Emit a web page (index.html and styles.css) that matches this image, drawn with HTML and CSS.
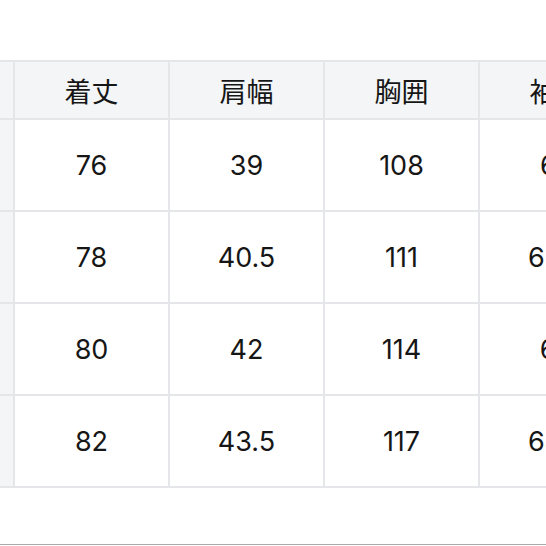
FILE: index.html
```html
<!DOCTYPE html>
<html lang="ja">
<head>
<meta charset="utf-8">
<title>サイズ表</title>
<link rel="stylesheet" href="styles.css">
</head>
<body>
<div class="frame">
  <div class="size-grid">
    <div class="cell head"></div>
    <div class="cell head">着丈</div>
    <div class="cell head">肩幅</div>
    <div class="cell head">胸囲</div>
    <div class="cell head">袖丈</div>

    <div class="cell label"></div>
    <div class="cell">76</div>
    <div class="cell">39</div>
    <div class="cell">108</div>
    <div class="cell">62</div>

    <div class="cell label"></div>
    <div class="cell">78</div>
    <div class="cell">40.5</div>
    <div class="cell">111</div>
    <div class="cell">62.5</div>

    <div class="cell label"></div>
    <div class="cell">80</div>
    <div class="cell">42</div>
    <div class="cell">114</div>
    <div class="cell">63</div>

    <div class="cell label"></div>
    <div class="cell">82</div>
    <div class="cell">43.5</div>
    <div class="cell">117</div>
    <div class="cell">64.5</div>
  </div>
</div>
</body>
</html>
```

FILE: styles.css
```css
html, body {
  margin: 0;
  padding: 0;
  background: #ffffff;
}

.frame {
  width: 546px;
  height: 545px;
  overflow: hidden;
  border-bottom: 1px solid #a9a9a9;
  padding-top: 60px;
  box-sizing: border-box;
}

.size-grid {
  display: grid;
  grid-template-columns: repeat(5, 153px);
  grid-template-rows: 56px repeat(4, 90px);
  gap: 2px;
  padding: 2px 0;
  margin-left: -140px;
  width: max-content;
  background: #e4e6e9;
}

.cell {
  display: flex;
  align-items: center;
  justify-content: center;
  background: #ffffff;
  color: #161616;
  font-family: "Inter", "Noto Sans CJK JP", sans-serif;
  font-size: 27px;
  font-weight: 400;
}

.head {
  background: #f3f5f7;
  font-size: 27px;
}

.label {
  background: #f3f5f7;
}
```
